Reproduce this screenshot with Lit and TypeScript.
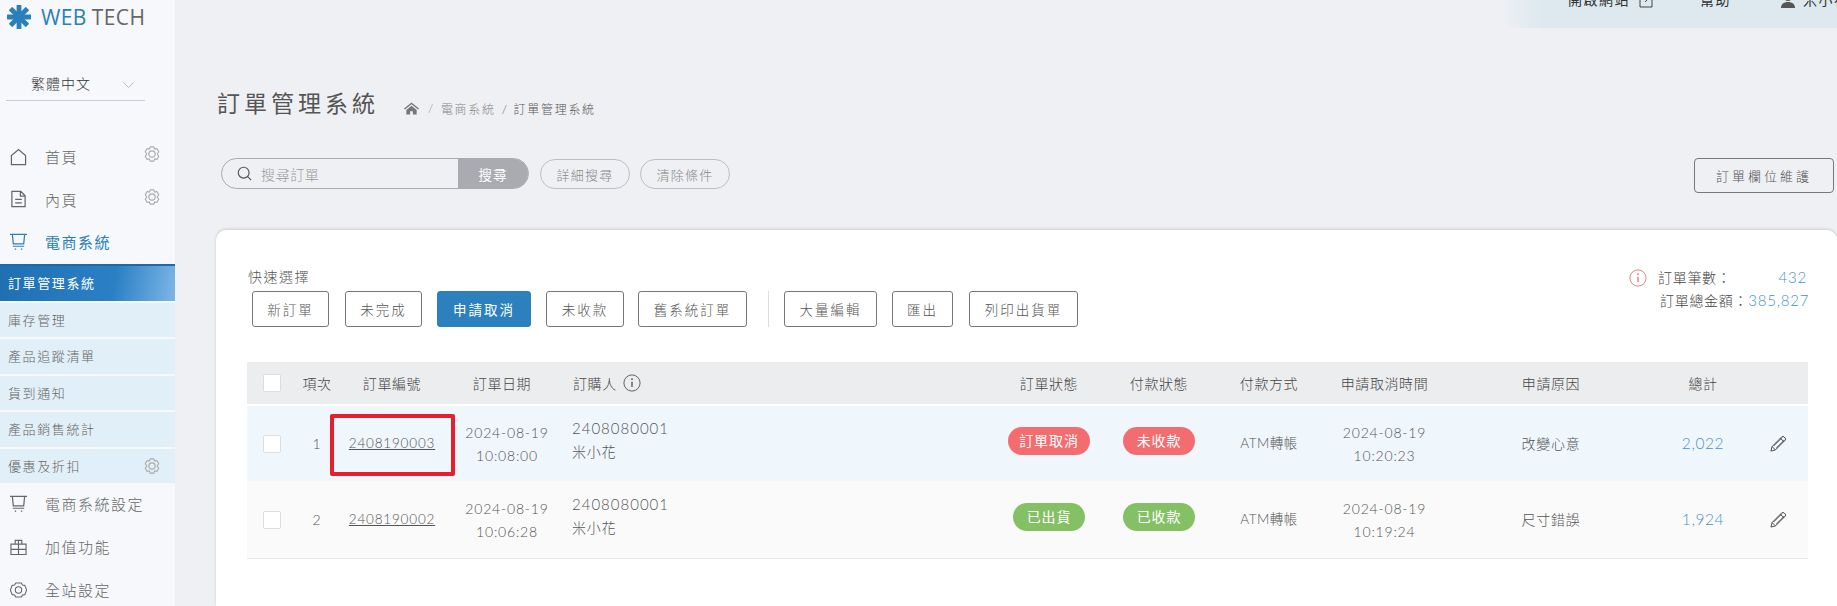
import { LitElement, html, css, svg } from "lit";
import { customElement } from "lit/decorators.js";

const gear = svg`<svg class="gear" viewBox="0 0 24 24" fill="none" stroke="currentColor" stroke-width="1.500"><path d="M9.500 2.500h5l1 3 3-.8 2.500 4.300-2.200 3 2.200 3-2.500 4.300-3-.8-1 3h-5l-1-3-3 .8L3 15l2.200-3L3 9l2.500-4.300 3 .8z" stroke-linejoin="round"/><circle cx="12" cy="12" r="4.200"/></svg>`;
const cart = svg`<svg class="mi" viewBox="0 0 18 18" fill="none" stroke="currentColor" stroke-width="1.300"><path d="M0 1h18M2.500 1l1 10h11l1-10M3 13.500h12"/><path d="M5 16.500h1.500M11.500 16.500H13" stroke-width="1.500"/></svg>`;
const info = svg`<svg viewBox="0 0 20 20" fill="none" stroke="currentColor" stroke-width="1"><circle cx="10" cy="10" r="9"/><path d="M10 8.500v6" stroke-width="1.500"/><circle cx="10" cy="5.700" r="1" fill="currentColor" stroke="none"/></svg>`;
const pencil = svg`<svg class="pencil" viewBox="0 0 18 18" fill="none" stroke="#444" stroke-width="1"><path d="M1 17l1.200-4.800L12.400 2a1.700 1.700 0 0 1 2.400 0l1.200 1.200a1.700 1.700 0 0 1 0 2.400L5.800 15.800z" stroke-linejoin="round"/><path d="M2.200 12.200l3.600 3.600M11 3.400l3.600 3.600M4 11.500L12.800 2.700M6.500 14L15.300 5.200"/></svg>`;

interface Row { n: number; id: string; date: string; time: string; buyer: string; name: string; st: string; stC: string; pay: string; payC: string; ct: string; ctm: string; reason: string; total: string; }
const rows: Row[] = [
  { n: 1, id: "2408190003", date: "2024-08-19", time: "10:08:00", buyer: "2408080001", name: "米小花", st: "訂單取消", stC: "red", pay: "未收款", payC: "red", ct: "2024-08-19", ctm: "10:20:23", reason: "改變心意", total: "2,022" },
  { n: 2, id: "2408190002", date: "2024-08-19", time: "10:06:28", buyer: "2408080001", name: "米小花", st: "已出貨", stC: "green", pay: "已收款", payC: "green", ct: "2024-08-19", ctm: "10:19:24", reason: "尺寸錯誤", total: "1,924" },
];

const quick: [string, number, number][] = [["新訂單", 77, 16], ["未完成", 77, 15], ["申請取消", 94, 15], ["未收款", 78, 14], ["舊系統訂單", 109, 21]];

@customElement("app-root")
export class AppRoot extends LitElement {
  static styles = css`
    :host { display: block; width: 1837px; height: 606px; overflow: hidden; background: #eef0f4; color: #555;
      font-family: Lato, "Noto Sans CJK TC", sans-serif; font-size: 14px; font-weight: 300; }
    * { box-sizing: border-box; }
    .app { display: flex; height: 606px; }
    .side { width: 175px; flex: none; background: #f6f8fb; overflow: hidden; }
    .logo { display: flex; align-items: center; padding: 0 0 0 7px; height: 34px; font-size: 21px; font-weight: 400; letter-spacing: .4px; font-family: "Open Sans", sans-serif; }
    .logo svg { width: 24px; height: 24px; margin-right: 10px; }
    .logo b { font-weight: 400; color: #2b7fbb; margin-right: 5px; } .logo span { color: #666; }
    .lang { margin: 40px 30px 0 6px; height: 27px; border-bottom: 1px solid #c8ccd4; display: flex; justify-content: space-between; align-items: flex-start; padding: 0 11px 0 25px; color: #333; font-size: 14px; line-height: 20px; letter-spacing: 1px; }
    .lang svg { width: 11px; height: 7px; margin-top: 8px; }
    .menu { margin-top: 35px; }
    .mi-row { height: 42.500px; display: flex; align-items: center; padding: 0 0 1.500px 10px; font-size: 15px; letter-spacing: 1.500px; color: #666; }
    .mi-row.lo { height: 43px; }
    .mi { width: 17px; height: 18px; margin-right: 18px; flex: none; }
    .gear { width: 18px; height: 18px; color: #aaa; flex: none; margin-left: auto; margin-right: 14px; align-self: flex-start; margin-top: 9px; }
    .blue { color: #2b7fbb; font-weight: 400; }
    .subs { display: flex; flex-direction: column; gap: 2px; }
    .sub { height: 34.500px; background: #e1eff8; display: flex; align-items: center; padding: 0 0 1.500px 8px; font-size: 13px; letter-spacing: 1.600px; color: #666; }
    .sub .gear { margin-top: 8px; }
    .sub.on { height: 37px; background: linear-gradient(100deg, #1f6fb2 0%, #2b80c5 65%, #7db6e6 100%); color: #fff; border-top: 2px solid #1e6aa8; font-weight: 400; }
    .main { flex: 1; min-width: 0; position: relative; display: flex; flex-direction: column; }
    .top { position: absolute; right: 0; top: -8px; width: 337px; height: 36px; background: linear-gradient(90deg, #eef0f4 0, #dde8ef 45px); color: #333; font-size: 14px; font-weight: 400; display: flex; align-items: flex-start; padding-left: 68px; letter-spacing: 1.500px; line-height: 16px; white-space: nowrap; }
    .top svg { width: 14px; height: 14px; margin-top: 2px; flex: none; }
    .head { display: flex; align-items: center; padding: 86px 0 0 42px; height: 120px; }
    .head h1 { margin: 0; font-size: 23px; font-weight: 400; letter-spacing: 4px; color: #555; line-height: 34px; }
    .crumb { display: flex; align-items: center; margin: 10px 0 0 25px; font-size: 12px; letter-spacing: 1.700px; color: #888; }
    .crumb svg { width: 15px; height: 13px; margin-right: 9px; }
    .crumb i { font-style: normal; margin-right: 6px; } .crumb em { font-style: normal; color: #555; margin-left: 6px; }
    .bar { display: flex; align-items: flex-start; padding: 0 3px 0 46px; height: 35px; margin-top: 38px; }
    .search { width: 308px; height: 31px; border: 1px solid #a9abb1; border-radius: 16px; display: flex; align-items: center; overflow: hidden; color: #999; font-size: 14px; letter-spacing: .6px; }
    .search svg { width: 15px; height: 15px; margin: 0 9px 0 15px; color: #555; }
    .search .t { flex: 1; }
    .search b { width: 70px; height: 100%; background: #a9abb1; color: #fff; font-weight: 400; font-size: 13.500px; display: flex; align-items: center; justify-content: center; letter-spacing: 1px; }
    .pill { height: 30px; width: 90px; border: 1px solid #bcbec4; border-radius: 15px; margin: 1px 0 0 10px; display: flex; align-items: center; justify-content: center; color: #888; font-size: 13px; letter-spacing: 1.200px; }
    .right { margin-left: auto; width: 140px; height: 35px; border: 1px solid #777; border-radius: 4px; display: flex; align-items: center; justify-content: center; font-size: 13px; letter-spacing: 3px; color: #555; }
    .card { margin: 37px 0 0 41px; flex: 1; background: #fff; border-radius: 10px 10px 0 0; box-shadow: 0 -1px 3px rgba(0,0,0,.15); padding: 38px 29px 0 31px; position: relative; }
    .ql { font-size: 14px; line-height: 18px; letter-spacing: 1.500px; color: #555; margin-left: 1px; }
    .btns { display: flex; align-items: center; margin: 5px 0 0 5px; }
    .btn { height: 36px; border: 1px solid #777; border-radius: 3px; display: flex; align-items: center; justify-content: center; font-size: 13.500px; letter-spacing: 2px; color: #555; background: #fff; }
    .btn.on { background: #2b80bd; border-color: #2b80bd; color: #fff; font-weight: 400; }
    .sep { width: 1px; height: 36px; background: #ddd; margin-right: 15px; }
    .sum { position: absolute; right: 30px; top: 35.500px; width: 178px; font-size: 14px; letter-spacing: .7px; line-height: 23px; color: #444; white-space: nowrap; }
    .sum div { display: flex; justify-content: space-between; align-items: baseline; padding-left: 29px; }
    .sum div + div { padding-left: 31px; }
    .sum b { font-weight: 300; color: #3f93cf; font-size: 15px; letter-spacing: .8px; }
    .sum svg { position: absolute; left: 0; top: 3px; width: 18px; height: 18px; color: #d97b7b; }
    .tbl { margin-top: 35px; }
    .tr { display: grid; grid-template-columns: 49px 42px 108px 122px 426px 110px 110px 110px 121px 212px 92px 59px; align-items: center; text-align: center; }
    .tr.h { height: 42px; background: #ecedef; margin-bottom: 2px; font-size: 14px; letter-spacing: .6px; color: #444; }
    .tr.r { font-size: 14px; letter-spacing: .8px; line-height: 23px; color: #555; }
    .tr.r1 { background: #eff6fc; height: 75px; }
    .tr.r2 { background: #fafafa; height: 78px; border-bottom: 1px solid #e8e8e8; }
    .cb { width: 18px; height: 18px; border: 1px solid #ddd; border-radius: 2px; background: #fff; margin-left: 16px; }
    .tr.r .cb { margin-top: 1px; }
    .dh { padding-right: 10px; }
    .l { text-align: left; padding: 0 0 8px 4px; }
    .buyer { display: flex; align-items: center; gap: 6px; padding: 0 0 0 5px; }
    .buyer svg { width: 18px; height: 18px; color: #555; }
    .id { text-decoration: underline; font-size: 13.500px; letter-spacing: .8px; }
    .big { font-size: 15px; letter-spacing: 1px; }
    .sc { padding-bottom: 5px; }
    .tag { display: inline-block; height: 28px; line-height: 28px; padding: 0 11px; border-radius: 14px; color: #fff; font-size: 14px; letter-spacing: .9px; font-weight: 400; min-width: 72px; }
    .red { background: #f36d70; } .green { background: #84c064; }
    .pay { letter-spacing: .5px; font-size: 13.500px; }
    .tot { color: #4a90cb; font-size: 15.500px; letter-spacing: .6px; font-weight: 300; }
    .pencil { width: 17px; height: 17px; display: block; margin: 0 auto; }
    .mark { position: absolute; left: 114px; top: 184px; width: 125px; height: 62px; border: 4px solid #e81e2d; border-radius: 2px; pointer-events: none; }
  `;

  private side() {
    return html`<aside class="side">
      <div class="logo"><svg viewBox="0 0 24 24" fill="#2b7fbb">${[0, 45, 90, 135].map(a => svg`<rect x="9.600" y="0" width="4.800" height="24" rx=".6" transform="rotate(${a} 12 12)"/>`)}</svg><b>WEB</b><span>TECH</span></div>
      <div class="lang">繁體中文<svg viewBox="0 0 11 7" fill="none" stroke="#bbb"><path d="M.5.5l5 5 5-5"/></svg></div>
      <div class="menu">
        <div class="mi-row"><svg class="mi" viewBox="0 0 18 18" fill="none" stroke="currentColor" stroke-width="1.300"><path d="M1.500 17V7.500L9 1l7.500 6.500V17z"/></svg>首頁${gear}</div>
        <div class="mi-row"><svg class="mi" viewBox="0 0 18 18" fill="none" stroke="currentColor" stroke-width="1.300"><path d="M2 1h9.500L16 5.500V17H2zM11 1v5h5M5.500 9.500h7M5.500 13h7"/></svg>內頁${gear}</div>
        <div class="mi-row blue">${cart}電商系統</div>
        <div class="subs">
          <div class="sub on">訂單管理系統</div>
          <div class="sub">庫存管理</div>
          <div class="sub">產品追蹤清單</div>
          <div class="sub">貨到通知</div>
          <div class="sub">產品銷售統計</div>
          <div class="sub">優惠及折扣${gear}</div>
        </div>
        <div class="mi-row lo">${cart}電商系統設定</div>
        <div class="mi-row lo"><svg class="mi" viewBox="0 0 18 18" fill="none" stroke="currentColor" stroke-width="1.200"><path d="M1 6h16v11H1zM1 11.500h16M9 6v11M5.500 6V2h7v4M9 2v4"/></svg>加值功能</div>
        <div class="mi-row lo"><svg class="mi" viewBox="0 0 24 24" fill="none" stroke="currentColor" stroke-width="1.500"><path d="M8 2h8l1.500 3 3.500.5 2.500 6.500-2.500 6.500-3.500.5L16 22H8l-1.500-3-3.500-.5L.5 12 3 5.500 6.500 5z" stroke-linejoin="round"/><circle cx="12" cy="12" r="4.500"/></svg>全站設定</div>
      </div>
    </aside>`;
  }

  render() {
    return html`<div class="app">
      ${this.side()}
      <main class="main">
        <div class="top">
          <span>開啟網站</span>
          <svg style="margin-left:9px" viewBox="0 0 14 14" fill="none" stroke="#444"><path d="M8 1H1v12h12V6M6 8l7-7"/></svg>
          <span style="margin-left:47px">幫助</span>
          <svg style="margin-left:50px" viewBox="0 0 14 14" fill="#555"><circle cx="7" cy="3.500" r="3.500"/><path d="M0 14c0-4 3-6 7-6s7 2 7 6z"/></svg>
          <span style="margin-left:8px">米小花</span>
        </div>
        <div class="head"><h1>訂單管理系統</h1>
          <div class="crumb"><svg viewBox="0 0 16 13" fill="#777"><path d="M8 0L0 6.500l1 1L8 2l7 5.500 1-1zM2.500 8L8 3.500 13.500 8v5H9.500V9.500h-3V13h-4z"/></svg><i>/</i>電商系統<em>/ 訂單管理系統</em></div>
        </div>
        <div class="bar">
          <div class="search"><svg viewBox="0 0 18 18" fill="none" stroke="currentColor" stroke-width="1.400"><circle cx="8" cy="8" r="6.500"/><path d="M12.500 12.500L17 17"/></svg><span class="t">搜尋訂單</span><b>搜尋</b></div>
          <div class="pill" style="margin-left:11px">詳細搜尋</div><div class="pill">清除條件</div>
          <div class="right">訂單欄位維護</div>
        </div>
        <section class="card">
          <div class="ql">快速選擇</div>
          <div class="btns">
            ${quick.map(([t, w, m], i) => html`<div class="btn ${i === 2 ? "on" : ""}" style="width:${w}px;margin-right:${m}px">${t}</div>`)}
            <div class="sep"></div>
            <div class="btn" style="width:93px;margin-right:15px">大量編輯</div>
            <div class="btn" style="width:61px;margin-right:16px">匯出</div>
            <div class="btn" style="width:109px">列印出貨單</div>
          </div>
          <div class="sum">${info}<div>訂單筆數：<b>432</b></div><div>訂單總金額：<b>385,827</b></div></div>
          <div class="tbl">
            <div class="tr h"><div class="cb"></div><div>項次</div><div>訂單編號</div><div class="dh">訂單日期</div><div class="l buyer">訂購人${info}</div><div>訂單狀態</div><div>付款狀態</div><div>付款方式</div><div>申請取消時間</div><div>申請原因</div><div>總計</div><div></div></div>
            ${rows.map(r => html`<div class="tr r r${r.n}">
              <div class="cb"></div><div>${r.n}</div><div class="id">${r.id}</div>
              <div>${r.date}<br>${r.time}</div>
              <div class="l"><span class="big">${r.buyer}</span><br>${r.name}</div>
              <div class="sc"><span class="tag ${r.stC}">${r.st}</span></div>
              <div class="sc"><span class="tag ${r.payC}">${r.pay}</span></div>
              <div class="pay">ATM轉帳</div>
              <div>${r.ct}<br>${r.ctm}</div>
              <div>${r.reason}</div>
              <div class="tot">${r.total}</div>
              <div>${pencil}</div>
            </div>`)}
          </div>
          <div class="mark"></div>
        </section>
      </main>
    </div>`;
  }
}
